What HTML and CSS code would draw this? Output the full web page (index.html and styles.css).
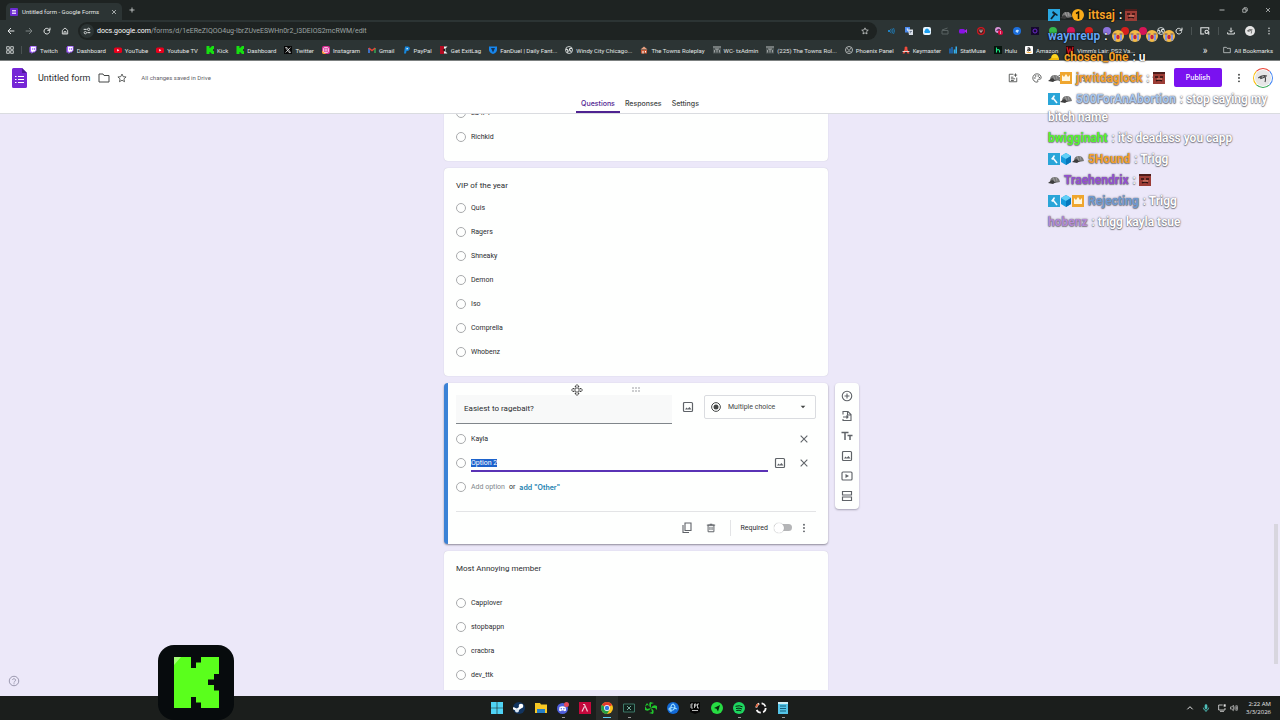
FILE: index.html
```html
<!DOCTYPE html>
<html lang="en">
<head>
    <meta charset="UTF-8">
    <meta name="viewport" content="width=device-width, initial-scale=1.0">
    <title>Untitled form - Google Forms</title>
    <link rel="stylesheet" href="styles.css">
</head>
<body>
    <svg class="sprite" aria-hidden="true">
        <symbol id="i-forms" viewBox="0 0 15 20"><path d="M1.500 0H10l5 5v13.500a1.500 1.500 0 0 1-1.500 1.500h-12A1.500 1.500 0 0 1 0 18.500v-17A1.500 1.500 0 0 1 1.500 0z" fill="#7627d6"/><path d="M10 0l5 5h-5z" fill="#4c1699"/><path d="M6 8.500h6M6 11.500h6M6 14.500h6M3 8.500h1.500M3 11.500h1.500M3 14.500h1.500" stroke="#fff" stroke-width="1.200"/></symbol>
        <symbol id="i-formtab" viewBox="0 0 8 8"><rect width="8" height="8" rx="1" fill="#6b2bd0"/><path d="M2 2.500h4M2 4h4M2 5.500h4" stroke="#fff" stroke-width=".8"/></symbol>
        <symbol id="i-close" viewBox="0 0 24 24"><path d="M4 4l16 16M20 4L4 20" fill="none" stroke="currentColor" stroke-width="2.600"/></symbol>
        <symbol id="i-plus" viewBox="0 0 24 24"><path d="M12 2v20M2 12h20" stroke="currentColor" stroke-width="3"/></symbol>
        <symbol id="i-min" viewBox="0 0 24 24"><path d="M2 12h20" stroke="currentColor" stroke-width="3"/></symbol>
        <symbol id="i-restore" viewBox="0 0 24 24"><path d="M3 8h13v13H3zM8 8V3h10a3 3 0 0 1 3 3v10h-5" fill="none" stroke="currentColor" stroke-width="2.600"/></symbol>
        <symbol id="i-back" viewBox="0 0 24 24"><path d="M22 12H4M12 3l-9 9 9 9" fill="none" stroke="currentColor" stroke-width="3"/></symbol>
        <symbol id="i-fwd" viewBox="0 0 24 24"><path d="M2 12h18M12 3l9 9-9 9" fill="none" stroke="currentColor" stroke-width="3"/></symbol>
        <symbol id="i-reload" viewBox="0 0 24 24"><path d="M20 13a8.500 8.500 0 1 1-3-7l3 3M21 2v8h-8" fill="none" stroke="currentColor" stroke-width="3"/></symbol>
        <symbol id="i-home" viewBox="0 0 24 24"><path d="M4 10l8-7 8 7v11H4zM9 21v-7h6v7" fill="none" stroke="currentColor" stroke-width="2.600"/></symbol>
        <symbol id="i-tune" viewBox="0 0 24 24"><path d="M2 7h9M22 17h-9" stroke="currentColor" stroke-width="3"/><circle cx="17" cy="7" r="3.500" fill="none" stroke="currentColor" stroke-width="2.500"/><circle cx="7" cy="17" r="3.500" fill="none" stroke="currentColor" stroke-width="2.500"/></symbol>
        <symbol id="i-star" viewBox="0 0 24 24"><path d="M12 2.500l2.900 6.300 6.900.7-5.200 4.600 1.500 6.800-6.100-3.500-6.100 3.500 1.500-6.800-5.200-4.600 6.900-.7z" fill="none" stroke="currentColor" stroke-width="2"/></symbol>
        <symbol id="i-grid" viewBox="0 0 24 24"><path d="M2 2h8v8H2zM14 2h8v8h-8zM2 14h8v8H2zM14 14h8v8h-8z" fill="none" stroke="currentColor" stroke-width="2.400"/></symbol>
        <symbol id="i-folder" viewBox="0 0 24 24"><path d="M2 4h8l2 3h10v13H2z" fill="none" stroke="currentColor" stroke-width="2"/></symbol>
        <symbol id="i-dots" viewBox="0 0 24 24"><circle cx="12" cy="4" r="2.300" fill="currentColor"/><circle cx="12" cy="12" r="2.300" fill="currentColor"/><circle cx="12" cy="20" r="2.300" fill="currentColor"/></symbol>
        <symbol id="i-download" viewBox="0 0 24 24"><path d="M12 2v13M6 10l6 6 6-6M2 16v5h20v-5" fill="none" stroke="currentColor" stroke-width="3"/></symbol>
        <symbol id="i-tabsearch" viewBox="0 0 24 24"><path d="M10 19H2V4h19v5M21 13v8" fill="none" stroke="currentColor" stroke-width="2.600"/><circle cx="16" cy="14" r="4" fill="none" stroke="currentColor" stroke-width="2.600"/></symbol>

        <symbol id="b-twitch" viewBox="0 0 16 16"><path d="M3 0h12v9l-4 4H8l-3 3v-3H1V3z" fill="#a15cff"/><path d="M4 1.500h9.500v7L11 11H8l-2 2v-2H4z" fill="#fff"/><path d="M7.500 4v4M11 4v4" stroke="#9146ff" stroke-width="1.500"/></symbol>
        <symbol id="b-youtube" viewBox="0 0 16 16"><rect y="3" width="16" height="11" rx="3" fill="#e8001c"/><path d="M6.500 6l4 2.500-4 2.500z" fill="#fff"/></symbol>
        <symbol id="b-kick" viewBox="0 0 16 16"><path d="M1 0h6v4h2V2h2V0h5v6h-2v4h2v6h-5v-2H9v-2H7v4H1z" fill="#17e011"/></symbol>
        <symbol id="b-x" viewBox="0 0 16 16"><path d="M0 0h16v16H0z" fill="#080808"/><path d="M3 3h3l7 10h-3zM13 3L3 13" fill="none" stroke="#fff" stroke-width="1.300"/></symbol>
        <symbol id="b-insta" viewBox="0 0 16 16"><rect width="16" height="16" rx="4" fill="#d92d94"/><path d="M0 9l8 7H4a4 4 0 0 1-4-4z" fill="#fba72b"/><rect x="3" y="3" width="10" height="10" rx="3" fill="none" stroke="#fff" stroke-width="1.400"/><circle cx="8" cy="8" r="2.300" fill="none" stroke="#fff" stroke-width="1.400"/></symbol>
        <symbol id="b-gmail" viewBox="0 0 16 16"><path d="M2 14V4" stroke="#4285f4" stroke-width="3"/><path d="M14 14V4" stroke="#34a853" stroke-width="3"/><path d="M1.500 4L8 9l6.500-5" fill="none" stroke="#ea4335" stroke-width="3"/></symbol>
        <symbol id="b-paypal" viewBox="0 0 16 16"><path d="M4 1h6q5 1 3 6-1 3-6 3l-1 5H2z" fill="#1687dd"/><path d="M7 4h3q1 3-3 3z" fill="#dff2ff"/></symbol>
        <symbol id="b-exit" viewBox="0 0 16 16"><path d="M0 0h8v16H0z" fill="#b30c22"/><path d="M8 1h7l-3 3v8l3 3H8z" fill="#f5f5f5"/><path d="M5 8l6-4v8z" fill="#1b1d1d"/></symbol>
        <symbol id="b-fan" viewBox="0 0 16 16"><path d="M0 1h16v6q0 6-8 9Q0 13 0 7z" fill="#1787ee"/><path d="M4 4h8L8 13z" fill="#153356"/></symbol>
        <symbol id="b-globe" viewBox="0 0 16 16"><circle cx="8" cy="8" r="7" fill="#2c3434" stroke="#dfe3e3" stroke-width="1.700"/><path d="M2 6q3 0 4 3t-2 4M14 5q-5-1-5 2t4 4" fill="none" stroke="#dfe3e3" stroke-width="2.500"/></symbol>
        <symbol id="b-phoenix" viewBox="0 0 16 16"><circle cx="8" cy="8" r="7" fill="none" stroke="#dfe3e3" stroke-width="1.500"/><path d="M4 5l3 2M12 5L9 7M5 11q3-3 6 0" fill="none" stroke="#dfe3e3" stroke-width="1.600"/></symbol>
        <symbol id="b-towns" viewBox="0 0 16 16"><path d="M8 1l7 6H1z" fill="#eba080"/><path d="M2 8h12v7H2z" fill="#c95a37"/><path d="M5 10h2v5H5zM10 10h2v3h-2z" fill="#fff"/></symbol>
        <symbol id="b-tx" viewBox="0 0 16 16"><path d="M0 0h16v15H0z" fill="#4d5555"/><path d="M0 2h16M4 6h8M8 6v7M3 8v5M13 8v5" stroke="#b5baba" stroke-width="1.500"/></symbol>
        <symbol id="b-key" viewBox="0 0 16 16"><path d="M8 1l7 14h-4L8 9l-3 6H1z" fill="#ef4b3c"/><circle cx="8" cy="4" r="3" fill="#ef4b3c"/><path d="M1 11h14" stroke="#fff" stroke-width="1.500"/></symbol>
        <symbol id="b-stat" viewBox="0 0 16 16"><path d="M2 5v10M6 2v13" stroke="#1c6fc4" stroke-width="3"/><path d="M11 7v8M14.500 1v14" stroke="#38b0ea" stroke-width="3"/></symbol>
        <symbol id="b-hulu" viewBox="0 0 16 16"><path d="M0 0h16v16H0z" fill="#07140d"/><path d="M5 3v10M5 8q6-2 6 2v3" fill="none" stroke="#1ce783" stroke-width="2.200"/></symbol>
        <symbol id="b-amazon" viewBox="0 0 16 16"><rect width="16" height="16" rx="2" fill="#fff"/><path d="M5 4q5-2 5 2v4M10 6Q4 6 5 9q3 2 5-1" fill="none" stroke="#111" stroke-width="1.800"/><path d="M3 12q5 3 10 0" fill="none" stroke="#ff9900" stroke-width="1.600"/></symbol>
        <symbol id="b-vimm" viewBox="0 0 16 16"><path d="M0 0h16v16H0z" fill="#2a0507"/><path d="M2 2l3 12 3-8 3 8 3-12" fill="none" stroke="#d3161f" stroke-width="2.500"/></symbol>

        <symbol id="e-wave" viewBox="0 0 16 16"><circle cx="4" cy="8" r="2" fill="#1d9bf0"/><path d="M7 4q3 4 0 8M10 3q4 5 0 10M13 2q4 6 0 12" fill="none" stroke="#1d86c8" stroke-width="1.500"/></symbol>
        <symbol id="e-trans" viewBox="0 0 16 16"><path d="M0 0h10v11H0z" fill="#4b8bf0"/><path d="M6 5h10v11H8z" fill="#d9dfe8"/><path d="M3 4h4M5 3v5" stroke="#fff" stroke-width="1.200"/><path d="M9 9h5M12 8l-2 5" stroke="#56657a" stroke-width="1.200"/></symbol>
        <symbol id="e-cloud" viewBox="0 0 16 16"><rect width="16" height="16" rx="4" fill="#e9f6ff"/><path d="M4 12a3 3 0 0 1 0-5 4 4 0 0 1 8 0 2.500 2.500 0 0 1 0 5z" fill="#1c9ff0"/></symbol>
        <symbol id="e-clap" viewBox="0 0 16 16"><path d="M2 7h12v7H2zM2 6l11-4" fill="none" stroke="#596262" stroke-width="2"/></symbol>
        <symbol id="e-camera" viewBox="0 0 16 16"><rect y="4" width="12" height="9" rx="3" fill="#8a11e8"/><path d="M11 8l5-4v9z" fill="#b02bf2"/></symbol>
        <symbol id="e-ublock" viewBox="0 0 16 16"><circle cx="8" cy="8" r="8" fill="#d01820"/><circle cx="8" cy="8" r="5.500" fill="#45191b"/><path d="M6 5v4q2 3 4 0V5" fill="none" stroke="#fff" stroke-width="1.500"/></symbol>
        <symbol id="e-bttv" viewBox="0 0 16 16"><circle cx="6" cy="6" r="6" fill="#d994d7"/><path d="M3 7l5-3 3 3" stroke="#5b3668" stroke-width="2"/><circle cx="11" cy="11" r="5" fill="#d80a42"/><path d="M11 8v6" stroke="#fff"/></symbol>
        <symbol id="e-blue" viewBox="0 0 16 16"><circle cx="8" cy="8" r="8" fill="#1d6fdd"/><path d="M5 9a4 4 0 0 1 7-2l-3 5z" fill="#b7dcff"/></symbol>
        <symbol id="e-purple" viewBox="0 0 16 16"><path d="M0 0h16v16H0z" fill="#16092e"/><circle cx="8" cy="8" r="4" fill="none" stroke="#6a2bc9" stroke-width="2"/></symbol>
        <symbol id="e-dot" viewBox="0 0 16 16"><circle cx="8" cy="8" r="8" fill="currentColor"/></symbol>
        <symbol id="i-avatar" viewBox="0 0 24 24"><circle cx="12" cy="12" r="12" fill="#e6e6e6"/><path d="M5 12q5-5 13-3M10 9l-2 4M14 9q3 3 1 9M8 13l6-2" fill="none" stroke="#454545" stroke-width="1.700"/></symbol>

        <symbol id="i-addchart" viewBox="0 0 24 24"><path d="M13 3H3v18h18V11M18 1v8M14 5h8M7 10h6M7 14h10M7 18h7" fill="none" stroke="currentColor" stroke-width="2"/></symbol>
        <symbol id="i-palette" viewBox="0 0 24 24"><path d="M12 2a10 10 0 1 0 0 20c3 0 2-3 1.500-4S14 15 16 15h2c3 0 4-2 4-4 0-5-5-9-10-9z" fill="none" stroke="currentColor" stroke-width="2"/><circle cx="7" cy="12" r="1.700" fill="currentColor"/><circle cx="9" cy="7" r="1.700" fill="currentColor"/><circle cx="15" cy="7" r="1.700" fill="currentColor"/><circle cx="18" cy="11" r="1.700" fill="currentColor"/></symbol>
        <symbol id="i-eye" viewBox="0 0 24 24"><path d="M1 12q11-15 22 0-11 15-22 0z" fill="none" stroke="currentColor" stroke-width="2"/><circle cx="12" cy="12" r="3.500" fill="none" stroke="currentColor" stroke-width="2"/></symbol>
        <symbol id="i-undo" viewBox="0 0 24 24"><path d="M4 9h11a5 5 0 0 1 0 10H7M9 4L4 9l5 5" fill="none" stroke="currentColor" stroke-width="2"/></symbol>
        <symbol id="i-redo" viewBox="0 0 24 24"><path d="M20 9H9a5 5 0 0 0 0 10h8M15 4l5 5-5 5" fill="none" stroke="currentColor" stroke-width="2"/></symbol>
        <symbol id="i-link" viewBox="0 0 24 24"><path d="M10 7H7a5 5 0 0 0 0 10h3M14 7h3a5 5 0 0 1 0 10h-3M8 12h8" fill="none" stroke="currentColor" stroke-width="2"/></symbol>
        <symbol id="i-person" viewBox="0 0 24 24"><circle cx="14" cy="8" r="4" fill="none" stroke="currentColor" stroke-width="2"/><path d="M7 20v-2q7-5 14 0v2zM4 7v7M1 10h6" fill="none" stroke="currentColor" stroke-width="2"/></symbol>

        <symbol id="i-image" viewBox="0 0 24 24"><rect x="3" y="3" width="18" height="18" rx="2" fill="none" stroke="currentColor" stroke-width="2.400"/><path d="M6 17l3-4 2.500 2.500L15 12l4 5z" fill="currentColor"/></symbol>
        <symbol id="i-radio" viewBox="0 0 24 24"><circle cx="12" cy="12" r="10.500" fill="none" stroke="currentColor" stroke-width="2.400"/><circle cx="12" cy="12" r="6" fill="currentColor"/></symbol>
        <symbol id="i-caret" viewBox="0 0 24 24"><path d="M5 8h14l-7 8z" fill="currentColor"/></symbol>
        <symbol id="i-copy" viewBox="0 0 24 24"><path d="M8 2h12v15H8zM4 6v15h12" fill="none" stroke="currentColor" stroke-width="2.200"/></symbol>
        <symbol id="i-trash" viewBox="0 0 24 24"><path d="M5 5h14v16H5zM2 5h20M9 3h6M9.500 9v8M14.500 9v8" fill="none" stroke="currentColor" stroke-width="2.400"/></symbol>
        <symbol id="i-addcircle" viewBox="0 0 24 24"><circle cx="12" cy="12" r="9.500" fill="none" stroke="currentColor" stroke-width="2.200"/><path d="M12 7v10M7 12h10" stroke="currentColor" stroke-width="2.200"/></symbol>
        <symbol id="i-import" viewBox="0 0 24 24"><path d="M4 9V3h10l6 6v12H4v-3M13 3v7h7M4 14h10M11 11l3 3-3 3" fill="none" stroke="currentColor" stroke-width="2.200"/></symbol>
        <symbol id="i-title" viewBox="0 0 24 24"><path d="M1 5h14M8 5v15M13 11h10M18 11v9" fill="none" stroke="currentColor" stroke-width="3"/></symbol>
        <symbol id="i-video" viewBox="0 0 24 24"><rect x="2" y="4" width="20" height="16" rx="2" fill="none" stroke="currentColor" stroke-width="2.300"/><path d="M9 8l7 4-7 4z" fill="currentColor"/></symbol>
        <symbol id="i-section" viewBox="0 0 24 24"><path d="M3 3h18v7H3zM3 14h18v7H3z" fill="none" stroke="currentColor" stroke-width="2.300"/></symbol>
        <symbol id="i-help" viewBox="0 0 24 24"><circle cx="12" cy="12" r="9.500" fill="none" stroke="currentColor" stroke-width="1.800"/><path d="M9 10a3 3 0 1 1 4.500 3Q12 14 12 15M12 16.500v2" fill="none" stroke="currentColor" stroke-width="1.800"/></symbol>
        <symbol id="i-drag" viewBox="0 0 10 6"><path d="M1 2h2M4 2h2M7 2h2M1 5h2M4 5h2M7 5h2" stroke="#9b9ea2" stroke-width="1.200"/></symbol>
        <symbol id="i-move" viewBox="0 0 24 24"><path d="M12 1l4 4h-2v5h5V8l4 4-4 4v-2h-5v5h2l-4 4-4-4h2v-5H5v2l-4-4 4-4v2h5V5H8z" fill="#fff" stroke="#333" stroke-width="1.700"/></symbol>

        <symbol id="c-mod" viewBox="0 0 12 12"><path d="M0 0h12v12H0z" fill="#2aa7e0"/><path d="M3 10l4-5" stroke="#10222c" stroke-width="1.800"/><path d="M5 2l5 4-1 1-5-3z" fill="#10222c"/></symbol>
        <symbol id="c-mod-light" viewBox="0 0 12 12"><path d="M0 0h12v12H0z" fill="#2aa5d8"/><path d="M9 10L5 5" stroke="#f4fbff" stroke-width="1.600"/><path d="M3 6l3-4 1 1-2 4z" fill="#f4fbff"/></symbol>
        <symbol id="c-cap" viewBox="0 0 12 12"><path d="M2 8q0-5 5-5 4 0 5 5l-5 1z" fill="#777"/><path d="M0 9l4-3 4 2-3 2z" fill="#3d3d3d"/><path d="M5 3l2 5M8 3l1 4" stroke="#a6a6a6" stroke-width=".8"/></symbol>
        <symbol id="c-cap-yellow" viewBox="0 0 12 12"><path d="M3 8q0-5 4-5 3 0 4 5z" fill="#ffd41f"/><path d="M0 9l3-2h8v2z" fill="#f1b809"/></symbol>
        <symbol id="c-one" viewBox="0 0 12 12"><circle cx="6" cy="6" r="6" fill="#f9ab19"/><path d="M4 4.500L6.500 3v7" fill="none" stroke="#1b1600" stroke-width="1.500"/></symbol>
        <symbol id="c-crown" viewBox="0 0 12 12"><path d="M0 0h12v12H0z" fill="#efa62f"/><path d="M2 3l2 2 2-3 2 3 2-2v6H2z" fill="#fff6df"/></symbol>
        <symbol id="c-cube" viewBox="0 0 12 12"><path d="M6 0l5 3v6l-5 3-5-3V3z" fill="#169bdd"/><path d="M6 0l5 3-5 3-5-3z" fill="#63cff7"/><path d="M6 6l5-3v6l-5 3z" fill="#0878bb"/></symbol>
        <symbol id="c-face" viewBox="0 0 12 12"><path d="M0 0h12v12H0z" fill="#9c3d36"/><path d="M0 0h12v2H0z" fill="#4e1d1b"/><path d="M2 5h3M7 5h3M3 9q3-2 6 0" fill="none" stroke="#2c1010" stroke-width="1.400"/><path d="M4 7h5" stroke="#e08c76" stroke-width="1.200"/></symbol>
        <symbol id="c-cry" viewBox="0 0 12 12"><circle cx="6" cy="6" r="6" fill="#f2bb47"/><path d="M3 4.500v6M9 4.500v6" stroke="#8596df" stroke-width="2"/><path d="M1.500 4h3M7.500 4h3" stroke="#6b5570" stroke-width="1"/><ellipse cx="6" cy="7" rx="1.700" ry="2.200" fill="#c42340"/></symbol>

        <symbol id="t-win" viewBox="0 0 12 12"><path d="M0 0h5.700v5.700H0zM6.300 0H12v5.700H6.300zM0 6.300h5.700V12H0zM6.300 6.300H12V12H6.300z" fill="#4fd3f5"/></symbol>
        <symbol id="t-steam" viewBox="0 0 12 12"><circle cx="6" cy="6" r="6" fill="#12345f"/><path d="M0 6l4 2 4-3" fill="none" stroke="#fff" stroke-width="2.200"/><circle cx="8" cy="4" r="2.300" fill="#fff"/><circle cx="4" cy="8.500" r="2" fill="#dbe8f4"/></symbol>
        <symbol id="t-files" viewBox="0 0 12 12"><path d="M0 1h5l1 1.500h6V11H0z" fill="#f8c824"/><path d="M2 7h8v4H2z" fill="#267fc7"/></symbol>
        <symbol id="t-discord" viewBox="0 0 12 12"><circle cx="5.500" cy="6.500" r="5.500" fill="#4f5fdc"/><path d="M2.500 5q3-1.500 6 0l.7 3.500-1.700.8-.7-.8H4.500l-.7.8-1.800-.8z" fill="#fff"/><circle cx="4.300" cy="6.700" r=".7" fill="#4f5fdc"/><circle cx="6.900" cy="6.700" r=".7" fill="#4f5fdc"/><circle cx="9.500" cy="2.500" r="2.500" fill="#e4485b"/></symbol>
        <symbol id="t-red" viewBox="0 0 12 12"><path d="M0 0h12v12H0z" fill="#c4083c"/><path d="M3 9.500l2.500-5M4 2.500h1.500l3 7" fill="none" stroke="#f1c9d4" stroke-width="1.200"/></symbol>
        <symbol id="t-chrome" viewBox="0 0 12 12"><circle cx="6" cy="6" r="6" fill="#f9c21b"/><path d="M6 6L.8 3A6 6 0 0 1 11.200 3z" fill="#e33b2e"/><path d="M6 6L.8 3A6 6 0 0 0 6 12l2.500-4z" fill="#26a047"/><circle cx="6" cy="6" r="2.900" fill="#fff"/><circle cx="6" cy="6" r="2.200" fill="#3577e5"/></symbol>
        <symbol id="t-monitor" viewBox="0 0 12 12"><path d="M.5 2h11v8H.5z" fill="#10201b" stroke="#3c7767"/><path d="M4 4l4 4M8 4L4 8" stroke="#76a99b"/></symbol>
        <symbol id="t-fan" viewBox="0 0 12 12"><path d="M6 6Q3 3 5 0l4 1-3 1zM6 6q2-4 6-2v4l-2-2zM6 6q4 2 2 6L4 11l3-1zM6 6Q4 10 0 8V4l2 3zM6 6L2 1 0 4l3-1z" fill="#21c52d"/></symbol>
        <symbol id="t-battle" viewBox="0 0 12 12"><circle cx="6" cy="6" r="6" fill="#1269d5"/><path d="M4 10Q3 3 6 2q4 3 0 6-4 1-4-1 1-3 8 0" fill="none" stroke="#98dcff" stroke-width="1.200"/></symbol>
        <symbol id="t-epic" viewBox="0 0 12 12"><path d="M1 0h10v10l-5 2-5-2z" fill="#050505"/><path d="M4 2H2v4h2M2 4h1.500M5.500 6V2H7v2H5.500M10 2H8.500v4H10M3 8.500h6" fill="none" stroke="#e5e5e5" stroke-width=".8"/></symbol>
        <symbol id="t-nav" viewBox="0 0 12 12"><circle cx="6" cy="6" r="6" fill="#27dc43"/><path d="M3 6l6-3-2 6.500-1.500-2.800z" fill="#06290c"/></symbol>
        <symbol id="t-spotify" viewBox="0 0 12 12"><circle cx="6" cy="6" r="6" fill="#1ed760"/><path d="M2.500 4.300q4-1.300 7 .5M3 6.500q3-1 6 .5M3.300 8.500q3-.8 5 .4" fill="none" stroke="#08210f"/></symbol>
        <symbol id="t-ring" viewBox="0 0 12 12"><circle cx="6" cy="6" r="4.700" fill="#151515" stroke="#f4f4f4" stroke-width="1.800" stroke-dasharray="5 2.400"/><path d="M1.300 5a4.700 4.700 0 0 1 2-3" fill="none" stroke="#e5653e" stroke-width="1.800"/></symbol>
        <symbol id="t-note" viewBox="0 0 12 12"><path d="M1 0h10v12H1z" fill="#55c5e8"/><path d="M1 0h10v2H1z" fill="#d2eef5"/><path d="M3 4h6M3 6.500h6M3 9h6" stroke="#17607c"/></symbol>
        <symbol id="s-up" viewBox="0 0 24 24"><path d="M4 16l8-8 8 8" fill="none" stroke="currentColor" stroke-width="3"/></symbol>
        <symbol id="s-mic" viewBox="0 0 24 24"><rect x="8" y="1" width="8" height="14" rx="4" fill="currentColor"/><path d="M4 11q0 8 8 8t8-8M12 19v5" fill="none" stroke="currentColor" stroke-width="2.600"/></symbol>
        <symbol id="s-net" viewBox="0 0 24 24"><path d="M14 3H2v15h19v-6M6 22h12" fill="none" stroke="currentColor" stroke-width="2.400"/><path d="M17 1h6v7h-6z" fill="currentColor"/></symbol>
        <symbol id="s-vol" viewBox="0 0 24 24"><path d="M1 9h4l5-5v16l-5-5H1zM14 8q3 4 0 8M17 5q5 7 0 14M20 3q7 9 0 18" fill="none" stroke="currentColor" stroke-width="2"/></symbol>
    </svg>

    <div class="browser">
        <div class="tabstrip">
            <div class="tab">
                <svg class="ico8"><use href="#i-formtab"/></svg>
                <span class="tab-title">Untitled form - Google Forms</span>
                <button class="bare" aria-label="Close tab"><svg class="ico6"><use href="#i-close"/></svg></button>
            </div>
            <button class="bare" aria-label="New tab"><svg class="ico6"><use href="#i-plus"/></svg></button>
            <div class="window-buttons">
                <button class="bare" aria-label="Minimize"><svg class="ico6"><use href="#i-min"/></svg></button>
                <button class="bare" aria-label="Restore"><svg class="ico6"><use href="#i-restore"/></svg></button>
                <button class="bare" aria-label="Close"><svg class="ico6"><use href="#i-close"/></svg></button>
            </div>
        </div>
        <div class="toolbar">
            <button class="bare tool" aria-label="Back"><svg class="ico8"><use href="#i-back"/></svg></button>
            <button class="bare tool dim" aria-label="Forward"><svg class="ico8"><use href="#i-fwd"/></svg></button>
            <button class="bare tool" aria-label="Reload"><svg class="ico8"><use href="#i-reload"/></svg></button>
            <button class="bare tool" aria-label="Home"><svg class="ico8"><use href="#i-home"/></svg></button>
            <div class="omnibox">
                <span class="tune"><svg class="ico8"><use href="#i-tune"/></svg></span>
                <span class="url"><b>docs.google.com</b>/forms/d/1eEReZIQOO4ug-IbrZUveESWHn0r2_i3DEIOS2mcRWM/edit</span>
                <button class="bare" aria-label="Bookmark"><svg class="ico8"><use href="#i-star"/></svg></button>
            </div>
            <div class="extensions">
                <svg class="ico8"><use href="#e-wave"/></svg>
                <svg class="ico8"><use href="#e-trans"/></svg>
                <svg class="ico8"><use href="#e-cloud"/></svg>
                <svg class="ico8"><use href="#e-clap"/></svg>
                <svg class="ico8"><use href="#e-camera"/></svg>
                <svg class="ico8"><use href="#e-ublock"/></svg>
                <svg class="ico8"><use href="#e-bttv"/></svg>
                <svg class="ico8"><use href="#e-blue"/></svg>
                <svg class="ico8"><use href="#e-purple"/></svg>
                <svg class="ico8 green"><use href="#e-dot"/></svg>
                <svg class="ico8 pink"><use href="#e-dot"/></svg>
                <svg class="ico8 red"><use href="#e-dot"/></svg>
                <svg class="ico8 violet"><use href="#e-dot"/></svg>
                <svg class="ico8 red"><use href="#e-dot"/></svg>
                <svg class="ico8 pink"><use href="#e-dot"/></svg>
                <svg class="ico8"><use href="#b-globe"/></svg>
                <svg class="ico8"><use href="#i-reload"/></svg>
            </div>
            <span class="vline"></span>
            <button class="bare" aria-label="Search tabs"><svg class="ico10"><use href="#i-tabsearch"/></svg></button>
            <span class="vline"></span>
            <button class="bare" aria-label="Downloads"><svg class="ico8"><use href="#i-download"/></svg></button>
            <button class="bare" aria-label="Profile"><svg class="ico10"><use href="#i-avatar"/></svg></button>
            <button class="bare" aria-label="Menu"><svg class="ico8"><use href="#i-dots"/></svg></button>
        </div>
        <nav class="bookmarks">
            <svg class="ico8"><use href="#i-grid"/></svg>
            <span class="vline"></span>
            <a href="#"><svg class="ico8"><use href="#b-twitch"/></svg>Twitch</a>
            <a href="#"><svg class="ico8"><use href="#b-twitch"/></svg>Dashboard</a>
            <a href="#"><svg class="ico8"><use href="#b-youtube"/></svg>YouTube</a>
            <a href="#"><svg class="ico8"><use href="#b-youtube"/></svg>Youtube TV</a>
            <a href="#"><svg class="ico8"><use href="#b-kick"/></svg>Kick</a>
            <a href="#"><svg class="ico8"><use href="#b-kick"/></svg>Dashboard</a>
            <a href="#"><svg class="ico8"><use href="#b-x"/></svg>Twitter</a>
            <a href="#"><svg class="ico8"><use href="#b-insta"/></svg>Instagram</a>
            <a href="#"><svg class="ico8"><use href="#b-gmail"/></svg>Gmail</a>
            <a href="#"><svg class="ico8"><use href="#b-paypal"/></svg>PayPal</a>
            <a href="#"><svg class="ico8"><use href="#b-exit"/></svg>Get ExitLag</a>
            <a href="#"><svg class="ico8"><use href="#b-fan"/></svg>FanDuel | Daily Fant...</a>
            <a href="#"><svg class="ico8"><use href="#b-globe"/></svg>Windy City Chicago...</a>
            <a href="#"><svg class="ico8"><use href="#b-towns"/></svg>The Towns Roleplay</a>
            <a href="#"><svg class="ico8"><use href="#b-tx"/></svg>WC- txAdmin</a>
            <a href="#"><svg class="ico8"><use href="#b-tx"/></svg>(225) The Towns Rol...</a>
            <a href="#"><svg class="ico8"><use href="#b-phoenix"/></svg>Phoenix Panel</a>
            <a href="#"><svg class="ico8"><use href="#b-key"/></svg>Keymaster</a>
            <a href="#"><svg class="ico8"><use href="#b-stat"/></svg>StatMuse</a>
            <a href="#"><svg class="ico8"><use href="#b-hulu"/></svg>Hulu</a>
            <a href="#"><svg class="ico8"><use href="#b-amazon"/></svg>Amazon</a>
            <a href="#"><svg class="ico8"><use href="#b-vimm"/></svg>Vimm's Lair: PS2 Va...</a>
            <button class="bare more" aria-label="More bookmarks">»</button>
            <a href="#"><svg class="ico8"><use href="#i-folder"/></svg>All Bookmarks</a>
        </nav>
    </div>

    <header class="app-header">
        <div class="app-bar">
            <svg class="forms-logo"><use href="#i-forms"/></svg>
            <h1>Untitled form</h1>
            <button class="bare" aria-label="Move to folder"><svg class="ico12"><use href="#i-folder"/></svg></button>
            <button class="bare" aria-label="Star"><svg class="ico10"><use href="#i-star"/></svg></button>
            <span class="saved">All changes saved in Drive</span>
            <div class="app-actions">
                <button class="bare" aria-label="Add chart"><svg class="ico10"><use href="#i-addchart"/></svg></button>
                <button class="bare" aria-label="Customize theme"><svg class="ico10"><use href="#i-palette"/></svg></button>
                <button class="bare" aria-label="Preview"><svg class="ico10"><use href="#i-eye"/></svg></button>
                <button class="bare" aria-label="Undo"><svg class="ico10"><use href="#i-undo"/></svg></button>
                <button class="bare" aria-label="Redo"><svg class="ico10"><use href="#i-redo"/></svg></button>
                <button class="bare" aria-label="Copy link"><svg class="ico10"><use href="#i-link"/></svg></button>
                <button class="bare" aria-label="Share"><svg class="ico10"><use href="#i-person"/></svg></button>
            </div>
            <button class="publish">Publish</button>
            <button class="bare" aria-label="More"><svg class="ico10"><use href="#i-dots"/></svg></button>
            <button class="bare account" aria-label="Account"><svg class="ico16"><use href="#i-avatar"/></svg></button>
        </div>
        <nav class="form-tabs">
            <a href="#" class="active">Questions</a>
            <a href="#">Responses</a>
            <a href="#">Settings</a>
        </nav>
    </header>

    <main class="workspace">
        <div class="scroller">
            <section class="card card-cut">
                <label class="option"><input type="radio" name="q1" disabled>LS4FT</label>
                <label class="option"><input type="radio" name="q1" disabled>Richkid</label>
            </section>

            <section class="card">
                <h2>VIP of the year</h2>
                <label class="option"><input type="radio" name="q2" disabled>Quis</label>
                <label class="option"><input type="radio" name="q2" disabled>Ragers</label>
                <label class="option"><input type="radio" name="q2" disabled>Shneaky</label>
                <label class="option"><input type="radio" name="q2" disabled>Demon</label>
                <label class="option"><input type="radio" name="q2" disabled>Iso</label>
                <label class="option"><input type="radio" name="q2" disabled>Comprella</label>
                <label class="option"><input type="radio" name="q2" disabled>Whobenz</label>
            </section>

            <section class="card card-edit">
                <div class="drag"><svg><use href="#i-drag"/></svg></div>
                <div class="question-row">
                    <input class="question" type="text" value="Easiest to ragebait?" aria-label="Question">
                    <button class="bare" aria-label="Add image"><svg class="ico12"><use href="#i-image"/></svg></button>
                    <div class="type">
                        <svg class="ico10"><use href="#i-radio"/></svg>
                        <select aria-label="Question type"><option>Multiple choice</option></select>
                        <svg class="ico8"><use href="#i-caret"/></svg>
                    </div>
                </div>
                <div class="option">
                    <input type="radio" name="q3" disabled aria-label="Option 1">
                    <input class="option-text" type="text" value="Kayla" aria-label="Option 1 text">
                    <button class="bare slot" aria-label="Remove option 1"><svg class="ico10"><use href="#i-close"/></svg></button>
                </div>
                <div class="option">
                    <input type="radio" name="q3" disabled aria-label="Option 2">
                    <input class="option-text current" id="option-2" type="text" value="Option 2" aria-label="Option 2 text">
                    <button class="bare slot" aria-label="Add image to option 2"><svg class="ico12"><use href="#i-image"/></svg></button>
                    <button class="bare slot" aria-label="Remove option 2"><svg class="ico10"><use href="#i-close"/></svg></button>
                </div>
                <div class="option">
                    <input type="radio" name="q3" disabled aria-label="New option">
                    <button class="bare add">Add option</button>
                    <span class="or">or</span>
                    <button class="bare other">add "Other"</button>
                </div>
                <div class="card-footer">
                    <button class="bare slot" aria-label="Duplicate"><svg class="ico12"><use href="#i-copy"/></svg></button>
                    <button class="bare slot" aria-label="Delete"><svg class="ico10"><use href="#i-trash"/></svg></button>
                    <label class="required">Required<input class="toggle" type="checkbox"></label>
                    <button class="bare slot" aria-label="More options"><svg class="ico10"><use href="#i-dots"/></svg></button>
                </div>
            </section>

            <aside class="rail">
                <button class="bare" aria-label="Add question"><svg class="ico12"><use href="#i-addcircle"/></svg></button>
                <button class="bare" aria-label="Import questions"><svg class="ico12"><use href="#i-import"/></svg></button>
                <button class="bare" aria-label="Add title"><svg class="ico12"><use href="#i-title"/></svg></button>
                <button class="bare" aria-label="Add image"><svg class="ico12"><use href="#i-image"/></svg></button>
                <button class="bare" aria-label="Add video"><svg class="ico12"><use href="#i-video"/></svg></button>
                <button class="bare" aria-label="Add section"><svg class="ico12"><use href="#i-section"/></svg></button>
            </aside>

            <section class="card card-described">
                <h2>Most Annoying member</h2>
                <label class="option"><input type="radio" name="q4" disabled>Capplover</label>
                <label class="option"><input type="radio" name="q4" disabled>stopbappn</label>
                <label class="option"><input type="radio" name="q4" disabled>cracbra</label>
                <label class="option"><input type="radio" name="q4" disabled>dev_ttk</label>
            </section>
        </div>
        <div class="scroll-thumb"></div>
        <button class="bare help" aria-label="Help"><svg class="ico12"><use href="#i-help"/></svg></button>
    </main>

    <footer class="taskbar">
        <div class="apps">
            <button class="bare" aria-label="Start"><svg class="ico12"><use href="#t-win"/></svg></button>
            <button class="bare" aria-label="Steam"><svg class="ico12"><use href="#t-steam"/></svg></button>
            <button class="bare" aria-label="Files"><svg class="ico12"><use href="#t-files"/></svg></button>
            <button class="bare open" aria-label="Discord"><svg class="ico12"><use href="#t-discord"/></svg></button>
            <button class="bare" aria-label="Launcher"><svg class="ico12"><use href="#t-red"/></svg></button>
            <button class="bare focused" aria-label="Chrome"><svg class="ico12"><use href="#t-chrome"/></svg></button>
            <button class="bare open" aria-label="Monitor"><svg class="ico12"><use href="#t-monitor"/></svg></button>
            <button class="bare" aria-label="Fan control"><svg class="ico12"><use href="#t-fan"/></svg></button>
            <button class="bare" aria-label="Battle.net"><svg class="ico12"><use href="#t-battle"/></svg></button>
            <button class="bare" aria-label="Epic Games"><svg class="ico12"><use href="#t-epic"/></svg></button>
            <button class="bare" aria-label="Navigator"><svg class="ico12"><use href="#t-nav"/></svg></button>
            <button class="bare open" aria-label="Spotify"><svg class="ico12"><use href="#t-spotify"/></svg></button>
            <button class="bare" aria-label="Recorder"><svg class="ico12"><use href="#t-ring"/></svg></button>
            <button class="bare open" aria-label="Notepad"><svg class="ico12"><use href="#t-note"/></svg></button>
        </div>
        <div class="tray">
            <svg class="ico8"><use href="#s-up"/></svg>
            <svg class="ico8 mic"><use href="#s-mic"/></svg>
            <span class="status"><svg class="ico8"><use href="#s-net"/></svg><svg class="ico8"><use href="#s-vol"/></svg></span>
            <div class="clock">2:22 AM<br>3/3/2026</div>
        </div>
    </footer>

    <!-- stream overlays -->
    <ul class="chat">
        <li><svg><use href="#c-mod"/></svg><svg><use href="#c-cap"/></svg><svg><use href="#c-one"/></svg> <b class="orange">ittsaj</b> : <svg><use href="#c-face"/></svg></li>
        <li class="emotes"><b class="sky">waynreup</b> : <svg><use href="#c-cry"/></svg> <svg><use href="#c-cry"/></svg> <svg><use href="#c-cry"/></svg> <svg><use href="#c-cry"/></svg></li>
        <li><svg><use href="#c-cap-yellow"/></svg> <b class="orange">chosen_0ne</b> : u</li>
        <li class="on-light"><svg><use href="#c-cap"/></svg><svg><use href="#c-crown"/></svg> <b class="orange">jrwitdaglock</b> : <svg><use href="#c-face"/></svg></li>
        <li class="on-light"><svg><use href="#c-mod-light"/></svg><svg><use href="#c-cap"/></svg> <b class="pale">500ForAnAbortion</b> : stop saying my bitch name</li>
        <li class="on-light"><b class="lime">bwigginaht</b> : it's deadass you capp</li>
        <li class="on-light"><svg><use href="#c-mod-light"/></svg><svg><use href="#c-cube"/></svg><svg><use href="#c-cap"/></svg> <b class="orange">5Hound</b> : Trigg</li>
        <li class="on-light"><svg><use href="#c-cap"/></svg> <b class="purple">Traehendrix</b> : <svg><use href="#c-face"/></svg></li>
        <li class="on-light"><svg><use href="#c-mod-light"/></svg><svg><use href="#c-cube"/></svg><svg><use href="#c-crown"/></svg> <b class="steel">Rejecting</b> : Trigg</li>
        <li class="on-light"><b class="lilac">hobenz</b> : trigg kayla tsue</li>
    </ul>
    <div class="kick-badge">
        <svg viewBox="0 0 45 51"><path d="M0 0h17v11h5V5.500h5V0h18v17h-5v5.500h-6v5.500h6v5.500h5V51H27v-5.500h-5V40h-5v11H0z" fill="#5aff1c"/><path d="M0 0h7L0 8z" fill="#a5ff78"/></svg>
    </div>
    <svg class="pointer"><use href="#i-move"/></svg>

    <script>
        const option = document.getElementById('option-2');
        option.focus();
        option.select();
    </script>
</body>
</html>
```
FILE: styles.css
```css
* {
    box-sizing: border-box;
}
body {
    margin: 0;
    height: 100vh;
    display: flex;
    flex-direction: column;
    overflow: hidden;
    position: relative;
    background: #ece8f9;
    color: #2b2d30;
    font-family: Roboto, sans-serif;
    font-size: 7px;
}
svg {
    display: block;
    flex: none;
}
a {
    color: inherit;
    text-decoration: none;
}
.sprite {
    display: none;
}
.bare {
    display: flex;
    align-items: center;
    justify-content: center;
    padding: 0;
    border: 0;
    background: none;
    color: inherit;
    font: inherit;
}
.ico6 { width: 6px; height: 6px; }
.ico8 { width: 8px; height: 8px; }
.ico10 { width: 10px; height: 10px; }
.ico12 { width: 12px; height: 12px; }
.ico16 { width: 16px; height: 16px; }

/* browser window */
.browser {
    flex: none;
    background: #2c3434;
    border-bottom: 1px solid #7c8080;
    color: #e3e6e6;
    font-size: 6px;
}
.tabstrip {
    display: flex;
    align-items: flex-end;
    gap: 7px;
    height: 20px;
    padding: 0 6px;
    background: #1e2322;
}
.tabstrip > .bare {
    height: 20px;
}
.tab {
    display: flex;
    align-items: center;
    gap: 4px;
    width: 116px;
    height: 17px;
    padding: 0 5px 0 4px;
    border-radius: 5px 5px 0 0;
    background: #2c3434;
}
.tab-title {
    flex: 1;
    white-space: nowrap;
}
.window-buttons {
    display: flex;
    gap: 17px;
    height: 20px;
    margin-left: auto;
    padding-right: 3px;
}
.toolbar {
    display: flex;
    align-items: center;
    gap: 10px;
    height: 22px;
    padding: 0 7px;
}
.dim {
    color: #7d8484;
}
.omnibox {
    flex: 1;
    display: flex;
    align-items: center;
    gap: 3px;
    height: 18px;
    margin-left: -1px;
    padding: 0 8px 0 2px;
    border-radius: 9px;
    background: #1e2322;
    color: #9da3a3;
    font-size: 7px;
}
.omnibox .bare {
    color: #e3e6e6;
}
.tune {
    display: grid;
    place-items: center;
    width: 14px;
    height: 14px;
    border-radius: 7px;
    background: #2c3434;
    color: #e3e6e6;
}
.url {
    flex: 1;
    white-space: nowrap;
}
.url b {
    font-weight: 400;
    color: #fff;
}
.extensions {
    display: flex;
    gap: 10px;
}
.green { color: #35b84b; }
.pink { color: #d51557; }
.red { color: #d5201d; }
.violet { color: #8c74dc; }
.vline {
    width: 1px;
    height: 8px;
    margin: 0 -2px;
    background: #4a5252;
}
.bookmarks {
    display: flex;
    align-items: center;
    gap: 8px;
    height: 18px;
    padding: 0 7px 2px 6px;
    white-space: nowrap;
}
.bookmarks .vline {
    margin: 0 -1px;
}
.bookmarks a {
    display: flex;
    align-items: center;
    gap: 3px;
}
.more {
    margin-left: auto;
    margin-right: 8px;
    font-size: 10px;
}

/* form header */
.app-header {
    flex: none;
    border-bottom: 1px solid #dadce0;
    background: #fff;
    color: #444746;
}
.app-bar {
    display: flex;
    align-items: center;
    height: 33px;
    padding: 0 7px 0 12px;
}
.forms-logo {
    width: 15px;
    height: 20px;
}
h1 {
    margin: 0 8px 0 11px;
    font-size: 9px;
    font-weight: 400;
    color: #2b2d30;
}
.app-bar > .bare + .bare {
    margin-left: 7px;
}
.saved {
    margin-left: 14px;
    font-size: 6px;
    color: #5f6368;
}
.app-actions {
    display: flex;
    gap: 14px;
    margin-left: auto;
}
.publish {
    width: 48px;
    height: 19px;
    margin: 0 12px;
    padding: 0;
    border: 0;
    border-radius: 2px;
    background: #7a12f0;
    color: #fff;
    font: 500 7px Inter, sans-serif;
}
.app-bar > .bare + .account {
    width: 20px;
    height: 20px;
    margin-left: 9px;
    border: 1px solid;
    border-color: #ea4335 #4285f4 #34a853 #fbbc04;
    border-radius: 10px;
}
.form-tabs {
    display: flex;
    justify-content: center;
    height: 19px;
    font: 500 7px/20px Inter, sans-serif;
}
.form-tabs a {
    padding: 0 5px;
}
.form-tabs .active {
    border-bottom: 2px solid #4f2391;
    color: #4f2391;
}

/* question list */
.workspace {
    flex: 1;
    min-height: 0;
    position: relative;
    padding: 0 8px 6px 0;
}
.scroller {
    display: grid;
    grid-template-columns: 1fr minmax(0, 384px) 1fr;
    grid-auto-rows: max-content;
    gap: 7px;
    height: 100%;
    overflow: hidden;
}
.card {
    grid-column: 2;
    padding: 10px 12px 12px;
    border-radius: 4px;
    background: #fefffe;
    box-shadow: 0 0 1px #b9b5c8;
}
.card-cut {
    margin-top: -13px;
    padding-top: 0;
}
h2 {
    margin: 0 0 2px;
    font-size: 8px;
    font-weight: 400;
    line-height: 16px;
}
.card-described h2 {
    margin-bottom: 14px;
}
.option {
    display: flex;
    align-items: center;
    gap: 5px;
    height: 24px;
}
input[type="radio"] {
    appearance: none;
    flex: none;
    width: 10px;
    height: 10px;
    margin: 0;
    border: 1px solid #a9abad;
    border-radius: 5px;
}
.card-edit {
    padding: 3px 12px 1px 8px;
    border-left: 4px solid #3b82d6;
    box-shadow: 0 1px 2px #8d8a99;
}
.drag {
    display: flex;
    justify-content: center;
    height: 9px;
}
.drag svg {
    width: 10px;
    height: 6px;
}
.question-row {
    display: flex;
    align-items: flex-start;
    justify-content: space-between;
    gap: 10px;
    height: 32px;
}
.question-row > .bare {
    height: 24px;
    color: #5f6368;
}
.question {
    flex: 0 1 216px;
    min-width: 0;
    height: 29px;
    padding: 0 8px 2px;
    border: 0;
    border-bottom: 1px solid #80868b;
    background: #f8f9f9;
    color: #2b2d30;
    font: 8px Roboto, sans-serif;
}
.type {
    display: flex;
    align-items: center;
    width: 112px;
    height: 24px;
    padding: 0 8px 0 6px;
    border: 1px solid #dadce0;
    border-radius: 2px;
    color: #444746;
}
.type select {
    flex: 1;
    appearance: none;
    padding: 0 0 0 7px;
    border: 0;
    background: none;
    color: inherit;
    font: 7px Roboto, sans-serif;
}
.option-text {
    flex: 1;
    min-width: 0;
    height: 16px;
    margin-right: -5px;
    padding: 0;
    border: 0;
    outline: 0;
    background: none;
    color: #2b2d30;
    font: 7px Roboto, sans-serif;
}
.option-text.current {
    height: 18px;
    border-top: 2px solid transparent;
    border-bottom: 2px solid #5a32b5;
}
.option-text::selection {
    background: #1d63cc;
    color: #fff;
}
.slot {
    width: 24px;
    color: #5f6368;
}
.option .slot {
    margin-right: -5px;
}
.option .slot:last-child {
    margin-right: 0;
}
.add {
    color: #80868b;
}
.or {
    margin-left: -1px;
}
.other {
    margin-left: -1px;
    color: #1a7fb0;
    font-family: Inter, sans-serif;
    font-weight: 600;
}
.card-footer {
    display: flex;
    align-items: center;
    justify-content: flex-end;
    height: 32px;
    margin-top: 12px;
    border-top: 1px solid #e3e4e6;
}
.required {
    display: flex;
    align-items: center;
    gap: 6px;
    height: 16px;
    margin-left: 7px;
    padding-left: 9px;
    border-left: 1px solid #e3e4e6;
}
.toggle {
    appearance: none;
    display: flex;
    align-items: center;
    width: 18px;
    height: 7px;
    margin: 0;
    border-radius: 4px;
    background: #b4b5b7;
}
.toggle::before {
    content: "";
    width: 10px;
    height: 10px;
    border-radius: 5px;
    background: #fff;
    box-shadow: 0 0 1px #8d8f92;
}
.rail {
    grid-column: 3;
    grid-row: 3;
    align-self: start;
    width: 24px;
    padding: 3px 0;
    border-radius: 4px;
    background: #fefffe;
    box-shadow: 0 1px 2px #a5a1b3;
    color: #5f6368;
}
.rail .bare {
    width: 24px;
    height: 20px;
}
.scroll-thumb {
    position: absolute;
    right: 2px;
    bottom: 32px;
    width: 4px;
    height: 24%;
    background: #d8d6df;
}
.help {
    position: absolute;
    left: 8px;
    bottom: 9px;
    color: #918ea6;
}

/* desktop taskbar */
.taskbar {
    flex: none;
    display: grid;
    grid-template-columns: 1fr auto 1fr;
    height: 24px;
    background: #1b1e1c;
    color: #e6e6e6;
    font: 6px/8px "Open Sans", sans-serif;
}
.apps {
    grid-column: 2;
    display: flex;
}
.apps .bare {
    width: 22px;
    height: 24px;
}
.apps .open {
    background: linear-gradient(#999, #999) center bottom 2px / 3px 1px no-repeat;
}
.apps .focused {
    background: linear-gradient(#60cdf5, #60cdf5) center bottom 2px / 8px 1px no-repeat, #292c2a;
}
.tray {
    display: flex;
    align-items: center;
    justify-content: flex-end;
    gap: 8px;
    padding-right: 9px;
}
.mic {
    color: #4fc0bb;
}
.status {
    display: flex;
    gap: 4px;
}
.clock {
    text-align: right;
}

/* stream overlays */
.chat {
    position: absolute;
    top: 6px;
    right: 2px;
    width: 230px;
    margin: 0;
    padding: 0;
    list-style: none;
    color: #fff;
    font: 600 12px/18px Roboto, sans-serif;
    text-shadow: 0 0 2px #000, 0 0 1px #000;
    pointer-events: none;
}
.chat li {
    margin-bottom: 3px;
}
.chat .on-light {
    text-shadow: 0 0 1px #77747f, 0 0 2px #77747f, 0 1px 1px #8b8894;
}
.chat svg {
    display: inline-block;
    width: 12px;
    height: 12px;
    vertical-align: -2px;
}
.chat b {
    margin-right: 1px;
    font-weight: 700;
}
.chat b:not(:first-child) {
    margin-left: 1px;
}
.chat .emotes svg {
    margin-left: 2px;
}
.orange { color: #f5a12a; }
.sky { color: #66a5f2; }
.pale { color: #a9c8ee; }
.lime { color: #55f52f; }
.purple { color: #9450d0; }
.steel { color: #6f9bd2; }
.lilac { color: #b58bd6; }
.kick-badge {
    position: absolute;
    left: 158px;
    bottom: 0;
    display: grid;
    place-items: center;
    width: 76px;
    height: 75px;
    border-radius: 16px;
    background: #070b0d;
}
.kick-badge svg {
    width: 45px;
    height: 51px;
}
.pointer {
    position: absolute;
    left: 571px;
    top: 384px;
    width: 12px;
    height: 12px;
}
```
